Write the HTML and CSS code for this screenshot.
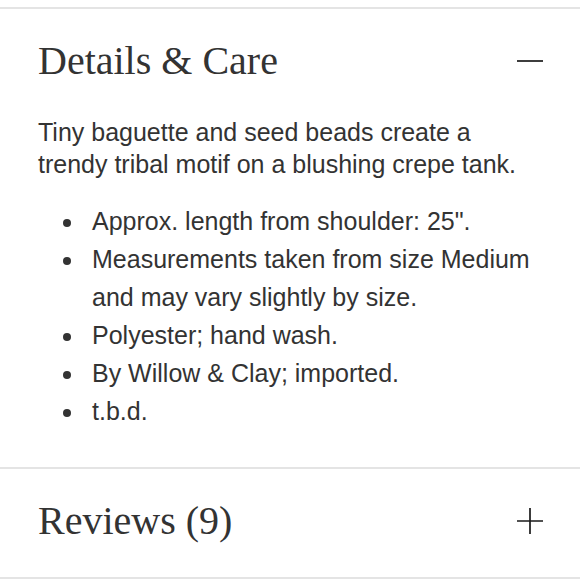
FILE: index.html
```html
<!DOCTYPE html>
<html>
<head>
<meta charset="utf-8">
<link rel="stylesheet" href="styles.css">
</head>
<body>
<div class="accordion">
  <section class="panel open">
    <div class="panel-head">
      <h2 class="panel-title">Details &amp; Care</h2>
      <svg class="toggle" width="26" height="26" viewBox="0 0 26 26"><path d="M0 13H26" stroke="#1a1a1a" stroke-width="1.7"/></svg>
    </div>
    <div class="panel-body">
      <p class="desc">Tiny baguette and seed beads create a trendy tribal motif on a blushing crepe tank.</p>
      <ul class="bullets">
        <li>Approx. length from shoulder: 25".</li>
        <li>Measurements taken from size Medium and may vary slightly by size.</li>
        <li>Polyester; hand wash.</li>
        <li>By Willow &amp; Clay; imported.</li>
        <li>t.b.d.</li>
      </ul>
    </div>
  </section>
  <section class="panel">
    <div class="panel-head">
      <h2 class="panel-title">Reviews (9)</h2>
      <svg class="toggle" width="26" height="26" viewBox="0 0 26 26"><path d="M0 13H26M13 0V26" stroke="#1a1a1a" stroke-width="1.7"/></svg>
    </div>
  </section>
</div>
</body>
</html>
```
FILE: styles.css
```css
html, body {
  margin: 0;
  padding: 0;
  background: #fff;
}
.accordion {
  padding-top: 7px;
}
.panel {
  border-top: 2px solid #e4e4e4;
  padding: 0 37px 0 38px;
}
.panel:last-child {
  border-bottom: 2px solid #e4e4e4;
}
.panel-head {
  display: flex;
  align-items: center;
  justify-content: space-between;
  padding: 31px 0 36px;
}
.panel.open .panel-head {
  padding-bottom: 0;
}
.panel-title {
  margin: 0;
  font-family: "Liberation Serif", "Times New Roman", serif;
  font-weight: normal;
  font-size: 40px;
  line-height: 41px;
  color: #333;
}
.toggle {
  display: block;
}
.panel-body {
  font-family: "Liberation Sans", Arial, sans-serif;
  font-size: 25px;
  color: #333;
  padding: 35px 0 37px;
}
.desc {
  margin: 0 0 22px;
  line-height: 32px;
}
.bullets {
  margin: 0;
  padding: 0 0 0 25px;
  list-style: none;
  line-height: 38px;
}
.bullets li {
  display: flex;
}
.bullets li::before {
  content: "";
  flex: none;
  width: 8px;
  height: 8px;
  border-radius: 50%;
  background: #333;
  margin: 17px 21px 0 0;
}
```
